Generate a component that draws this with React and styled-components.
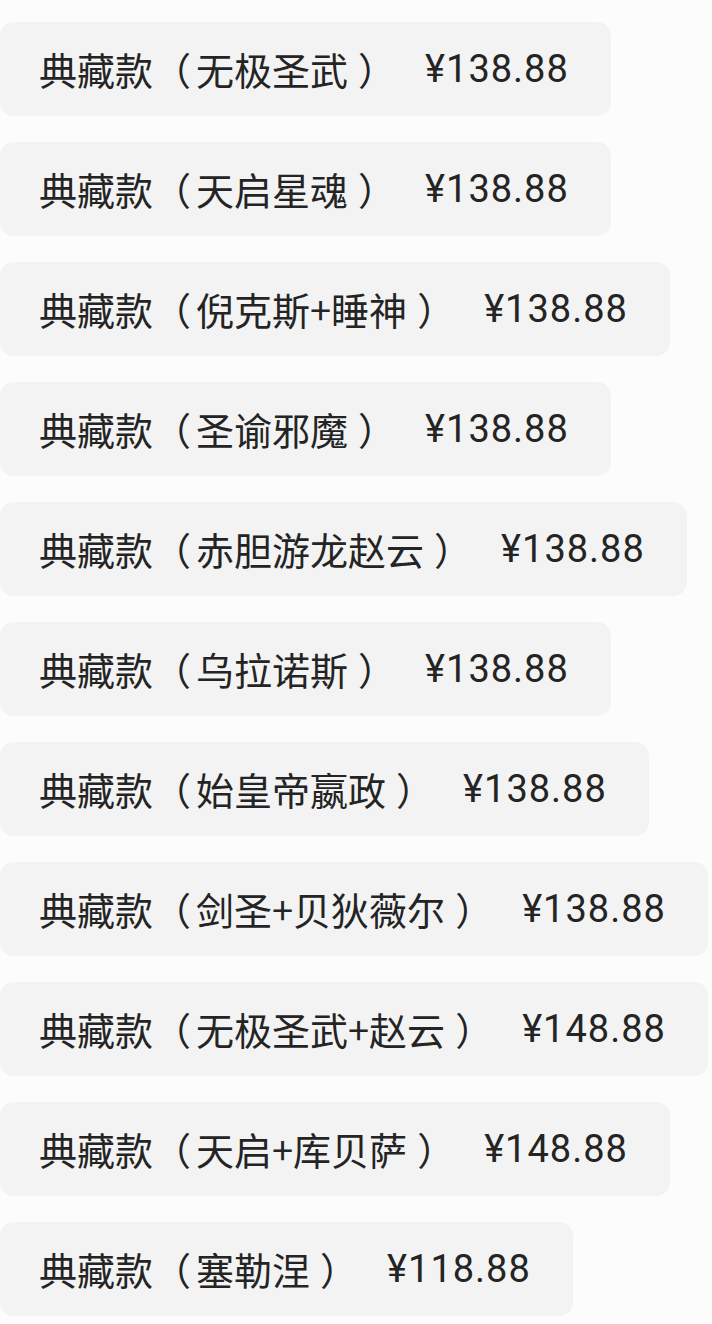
import React from "react";
import styled, { createGlobalStyle } from "styled-components";

const items = [
  { name: "无极圣武", price: "¥138.88" },
  { name: "天启星魂", price: "¥138.88" },
  { name: "倪克斯+睡神", price: "¥138.88" },
  { name: "圣谕邪魔", price: "¥138.88" },
  { name: "赤胆游龙赵云", price: "¥138.88" },
  { name: "乌拉诺斯", price: "¥138.88" },
  { name: "始皇帝嬴政", price: "¥138.88" },
  { name: "剑圣+贝狄薇尔", price: "¥138.88" },
  { name: "无极圣武+赵云", price: "¥148.88" },
  { name: "天启+库贝萨", price: "¥148.88" },
  { name: "塞勒涅", price: "¥118.88" },
];

const GlobalStyle = createGlobalStyle`
  html, body {
    margin: 0;
    padding: 0;
    background: #fcfcfc;
  }
`;

const List = styled.div`
  display: flex;
  flex-direction: column;
  align-items: flex-start;
  gap: 26px;
  padding-top: 22px;
  font-family: "Noto Sans CJK SC", "Noto Sans", sans-serif;
  color: #242424;
`;

const Option = styled.div`
  display: flex;
  align-items: center;
  height: 94px;
  box-sizing: border-box;
  padding: 0 42px 0 39px;
  background: #f3f3f3;
  border-radius: 14px;
  font-size: 38px;
  line-height: 1;
  white-space: nowrap;
`;

const Name = styled.span``;

// the phone font sets full-width brackets with more air round them
const Bracket = styled.span`
  display: inline-block;
  padding: ${(p) => (p.$close ? "0 0 0 10px" : "0 5px 0 0")};
`;

const Price = styled.span`
  margin-left: 29px;
  font-family: Roboto, "Liberation Sans", sans-serif;
  letter-spacing: 1px;
`;

export default function App() {
  return (
    <>
      <GlobalStyle />
      <List>
        {items.map((item, i) => (
          <Option key={i}>
            <Name>
              典藏款<Bracket>（</Bracket>
              {item.name}
              <Bracket $close>）</Bracket>
            </Name>
            <Price>{item.price}</Price>
          </Option>
        ))}
      </List>
    </>
  );
}
